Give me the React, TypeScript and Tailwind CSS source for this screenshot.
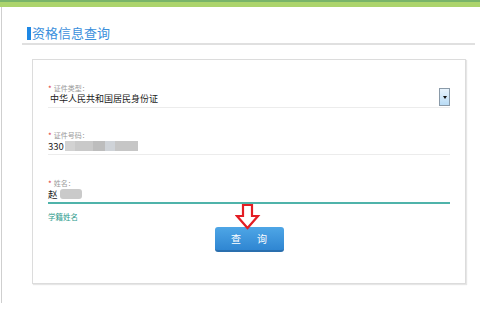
import React from "react";

const font = { fontFamily: '"Noto Sans CJK SC", "Noto Sans", sans-serif' };

const Label = ({ text }: { text: string }) => (
  <div className="flex items-center h-[9px] leading-[9px] text-[7px] text-[#9a9a9a] overflow-hidden">
    <span className="text-[#e03a3a] mr-[2px] text-[8px] leading-none">*</span>
    <span className="leading-none">{text}</span>
  </div>
);

const DownArrow = () => (
  <svg width="26" height="26" viewBox="0 0 26 26" className="absolute left-[20px] -top-[20px]">
    <path
      d="M8 1 H17 V12 H23 L12.5 24 L2 12 H8 Z"
      fill="white"
      stroke="#e31e24"
      strokeWidth="2.2"
      strokeLinejoin="miter"
    />
  </svg>
);

export default function App() {
  return (
    <div className="w-[480px] h-[311px] bg-white overflow-hidden" style={font}>
      <div className="h-[2px] bg-[#79b46a]" />
      <div className="h-[5px] bg-[#acd46c]" />
      <div className="ml-[1px] h-[296px] border-l border-[#cfcfcf]">
        <div className="ml-[20px] w-[453px] pt-[19px] pb-[3px] border-b-2 border-[#e0e0e0]">
          <div className="flex items-center h-[14px] pl-[5px]">
            <span className="w-[4px] h-[13px] bg-[#1e88e5] mr-[1px]" />
            <span className="text-[13px] leading-[14px] text-[#3b8fdc]">资格信息查询</span>
          </div>
        </div>

        <div className="ml-[30px] mt-[14px] w-[434px] h-[225px] border border-[#dcdcdc] shadow-[1px_1px_1px_#e6e6e6] px-[15px] pt-[24px]">
          <div className="relative">
            <Label text="证件类型：" />
            <div className="h-[12px] leading-[12px] text-[9px] text-[#222] pl-[2px]">中华人民共和国居民身份证</div>
            <div className="mt-[2px] h-px bg-[#ececec]" />
            <div className="absolute right-0 top-[4px] w-[11px] h-[18px] border border-[#8a9aa8] bg-gradient-to-b from-[#e8f4fd] to-[#b9dcf5] flex items-center justify-center">
              <span className="w-0 h-0 border-l-[2.5px] border-r-[2.5px] border-t-[3px] border-l-transparent border-r-transparent border-t-[#111]" />
            </div>
          </div>

          <div className="mt-[23px]">
            <Label text="证件号码：" />
            <div className="flex items-center h-[12px] leading-[12px] text-[9.5px] text-[#222]">
              <span>330</span>
              <span className="flex ml-[1px] h-[10px] blur-[0.6px]">
                <span className="w-[10px] bg-[#d2d2d2]" />
                <span className="w-[18px] bg-[#c9c9c9]" />
                <span className="w-[12px] bg-[#bdbdbd]" />
                <span className="w-[10px] bg-[#cfd3d8]" />
                <span className="w-[23px] bg-[#c6c6c6]" />
              </span>
            </div>
            <div className="mt-[2px] h-px bg-[#ececec]" />
          </div>

          <div className="mt-[24px]">
            <Label text="姓名：" />
            <div className="flex items-center h-[12px] leading-[12px] text-[9.5px] text-[#222]">
              <span>赵</span>
              <span className="ml-[2px] w-[22px] h-[10px] bg-[#cacaca] rounded-[3px] blur-[0.7px]" />
            </div>
            <div className="mt-[2px] h-[2px] bg-[#4fb3aa]" />
            <div className="mt-[8px] h-[9px] leading-[9px] text-[7.5px] text-[#2e9c8e]">学籍姓名</div>
          </div>

          <div className="relative mt-[3px] mx-auto w-[69px]">
            <DownArrow />
            <button className="w-[69px] h-[25px] rounded-[3px] bg-gradient-to-b from-[#4ea6e6] to-[#2f86d2] border-b-2 border-[#2a6fae] text-white text-[10px] tracking-[16px] pl-[16px]">
              查询
            </button>
          </div>
        </div>
      </div>
    </div>
  );
}
